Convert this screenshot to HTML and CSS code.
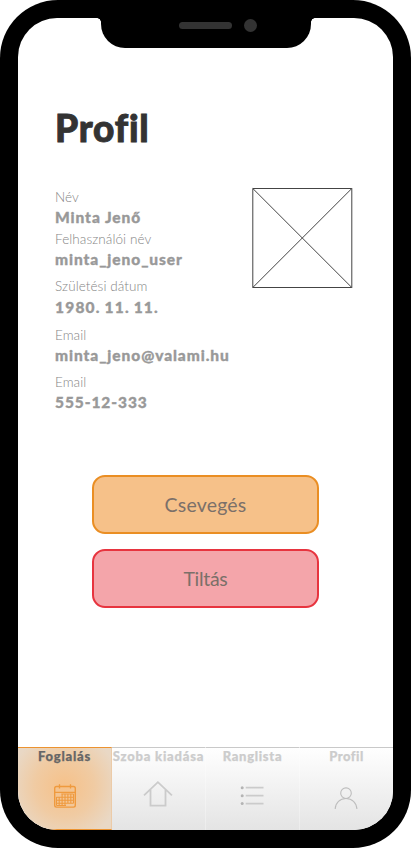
FILE: index.html
```html
<!DOCTYPE html>
<html lang="hu">
<head>
<meta charset="utf-8">
<title>Profil</title>
<link rel="stylesheet" href="styles.css">
</head>
<body>
<div class="phone">
  <div class="notch"><span class="speaker"></span><span class="camera"></span></div>
  <div class="screen">
    <main class="content">
      <h1 class="title">Profil</h1>
      <section class="profile">
        <dl class="fields">
          <div class="field field-name"><dt>Név</dt><dd>Minta Jenő</dd></div>
          <div class="field field-user"><dt>Felhasználói név</dt><dd>minta_jeno_user</dd></div>
          <div class="field field-birth"><dt>Születési dátum</dt><dd>1980. 11. 11.</dd></div>
          <div class="field field-email"><dt>Email</dt><dd>minta_jeno@valami.hu</dd></div>
          <div class="field field-phone"><dt>Email</dt><dd>555-12-333</dd></div>
        </dl>
        <svg class="avatar" viewBox="0 0 101 101"><path d="M.8 1.500H99.800V100.500H.8ZM.8 1.500L99.800 100.500M99.800 1.500L.8 100.500"/></svg>
      </section>
      <div class="actions">
        <button class="btn btn-chat">Csevegés</button>
        <button class="btn btn-ban">Tiltás</button>
      </div>
    </main>
    <nav class="tabs">
      <a class="tab tab-active"><span>Foglalás</span>
        <svg class="icon" viewBox="0 0 32 32"><g fill="none" stroke="#ef9a3e"><rect x="5.700" y="6.500" width="20.600" height="20.600" rx="1.800" stroke-width="1.400"/><path stroke-width="1.300" d="M5.700 12.300H26.300M10.500 4.200V8.500M21.500 4.200V8.500"/><path stroke-width="1.100" d="M12.300 14H24.500M7.500 17.200H24.500M7.500 20.300H24.500M7.500 23.300H24.500M7.500 25.500H17M7.500 17V25.500M10.200 17V25.500M13.100 14V25.500M16 14V25.500M18.900 14V23.300M21.800 14V23.300M24.500 14V23.300"/></g></svg></a>
      <a class="tab"><span>Szoba kiadása</span>
        <svg class="icon" viewBox="0 0 32 32"><path fill="none" stroke="#cbcbcb" stroke-width="1.800" d="M1 15.300L14.900 2.200L28.900 15.300M7.500 9.500V25.600H22.500V9.500"/></svg></a>
      <a class="tab tab-rank"><span>Ranglista</span>
        <svg class="icon" viewBox="0 0 32 32"><g fill="#b4b4b4"><circle cx="5.200" cy="7.700" r="1.500"/><circle cx="5.200" cy="15.700" r="1.500"/><circle cx="5.200" cy="23.600" r="1.500"/></g><path stroke="#cbcbcb" stroke-width="1.700" d="M8.700 7.700H26.500M8.700 15.700H26.500M8.700 23.600H26.500"/></svg></a>
      <a class="tab tab-profile"><span>Profil</span>
        <svg class="icon" viewBox="0 0 32 32"><g fill="none" stroke="#bdbdbd" stroke-width="1.100"><circle cx="15" cy="13.200" r="5.300"/><path d="M4.200 29C4.500 22.500 9 18.500 15 18.500S25.500 22.500 25.900 29"/></g></svg></a>
    </nav>
  </div>
</div>
</body>
</html>
```

FILE: styles.css
```css
* { box-sizing: border-box; }
body { margin: 0; background: #fff; font-family: Lato, "Liberation Sans", sans-serif; }
.phone { position: relative; width: 411px; height: 848px; padding: 18px; background: #000; border-radius: 58px; }
.notch { position: absolute; top: 0; left: 101px; width: 210px; height: 48px; background: #000; border-radius: 0 0 24px 24px; z-index: 2; }
.notch::before, .notch::after { content: ""; position: absolute; top: 18px; width: 4px; height: 4px; }
.notch::before { left: -4px; background: radial-gradient(circle at 0 100%, transparent 3.500px, #000 4px); }
.notch::after { right: -4px; background: radial-gradient(circle at 100% 100%, transparent 3.500px, #000 4px); }
.speaker { position: absolute; left: 78px; top: 22px; width: 53px; height: 7px; border-radius: 4px; background: #333; }
.camera { position: absolute; left: 143px; top: 19px; width: 13px; height: 13px; border-radius: 50%; background: #333; }
.screen { display: flex; flex-direction: column; height: 812px; background: #fff; border-radius: 39px; overflow: hidden; }
.content { flex: 1; padding: 88px 37px 0; }
.title { margin: 0 0 37px; font-size: 37px; line-height: 44px; font-weight: 900; letter-spacing: .8px; color: #333; -webkit-text-stroke: .9px #333; }
.profile { display: flex; justify-content: space-between; align-items: flex-start; height: 288px; }
.fields { margin: 0; white-space: nowrap; color: #999; }
.field-name { height: 42px; }
.field-user { height: 47px; }
.field-birth { height: 49px; }
.field-birth dd { padding-top: 1px; letter-spacing: 1.200px; word-spacing: -1px; }
.field-email { height: 47px; }
dt { font-size: 13.500px; line-height: 20px; font-weight: 300; letter-spacing: .08px; color: #858585; }
dd { margin: 0; font-size: 15.500px; line-height: 20px; font-weight: 900; letter-spacing: .92px; -webkit-text-stroke: .35px #999; }
.avatar { width: 101px; height: 101px; margin-right: 3px; fill: none; stroke: #444; stroke-width: 1; }
.actions { display: grid; gap: 15px; width: 227px; margin-left: 37px; }
.btn { height: 59px; padding: 0 0 1px; border: 2px solid; border-radius: 13px; font: 400 19.500px Lato, sans-serif; color: #7b7069; }
.btn-chat { border-color: #ea8e23; background: #f6c189; letter-spacing: .2px; }
.btn-ban { border-color: #e7343f; background: #f4a5aa; letter-spacing: -.3px; }
.tabs { display: grid; grid-template-columns: 94px 94px 94px 93px; height: 83px; background: linear-gradient(#fff, #e4e4e4); }
.tab { display: flex; flex-direction: column; align-items: center; border-top: 1px solid #c9c9c9; border-right: 1px solid rgba(255, 255, 255, .3); color: #ccc; font-size: 13px; font-weight: 900; line-height: 17px; letter-spacing: .8px; white-space: nowrap; -webkit-text-stroke: .25px; }
.tab:last-child { border-right: 0; }
.tab-rank { letter-spacing: .7px; }
.tab-profile { letter-spacing: .5px; }
.tab-active { color: #666; border-top-color: #ec9330; border-right-color: #eccba8; border-bottom: 1px solid #ec9330; background: radial-gradient(circle at 50% 48%, #f6c189 0, #f0cba3 30px, #e9d8c5 55px); }
.icon { width: 32px; height: 32px; margin-top: 15px; }
```
